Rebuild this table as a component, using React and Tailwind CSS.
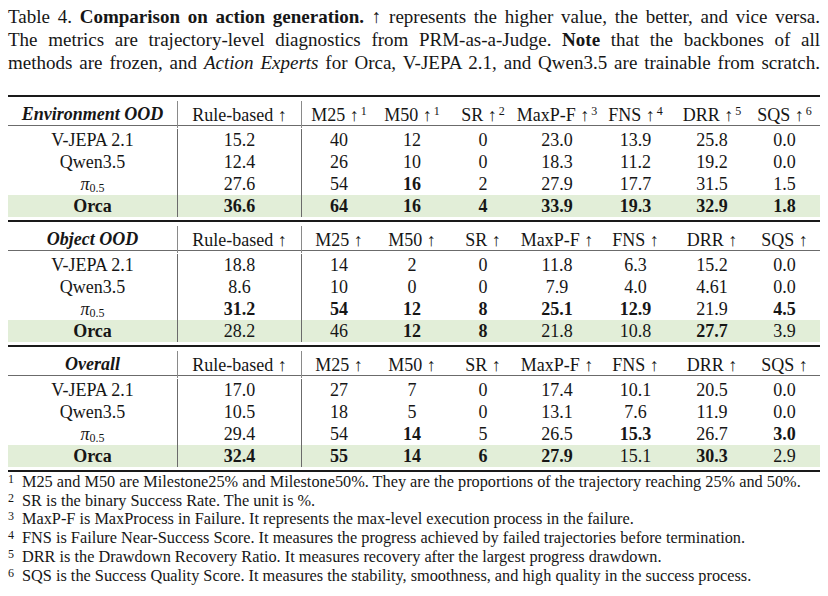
const cols = 'grid grid-cols-[170px_124px_74px_72px_70px_78px_79px_74px_71px]'

const heads = ['Rule-based', 'M25', 'M50', 'SR', 'MaxP-F', 'FNS', 'DRR', 'SQS']
const sups = ['', '1', '1', '2', '3', '4', '5', '6']

const sections = [
  {
    title: 'Environment OOD',
    numbered: true,
    rows: [
      ['15.2', '40', '12', '0', '23.0', '13.9', '25.8', '0.0'],
      ['12.4', '26', '10', '0', '18.3', '11.2', '19.2', '0.0'],
      ['27.6', '54', '*16', '2', '27.9', '17.7', '31.5', '1.5'],
      ['*36.6', '*64', '*16', '*4', '*33.9', '*19.3', '*32.9', '*1.8'],
    ],
  },
  {
    title: 'Object OOD',
    rows: [
      ['18.8', '14', '2', '0', '11.8', '6.3', '15.2', '0.0'],
      ['8.6', '10', '0', '0', '7.9', '4.0', '4.61', '0.0'],
      ['*31.2', '*54', '*12', '*8', '*25.1', '*12.9', '21.9', '*4.5'],
      ['28.2', '46', '*12', '*8', '21.8', '10.8', '*27.7', '3.9'],
    ],
  },
  {
    title: 'Overall',
    rows: [
      ['17.0', '27', '7', '0', '17.4', '10.1', '20.5', '0.0'],
      ['10.5', '18', '5', '0', '13.1', '7.6', '11.9', '0.0'],
      ['29.4', '54', '*14', '5', '26.5', '*15.3', '26.7', '*3.0'],
      ['*32.4', '*55', '*14', '*6', '*27.9', '15.1', '*30.3', '2.9'],
    ],
  },
]

const notes = [
  'M25 and M50 are Milestone25% and Milestone50%. They are the proportions of the trajectory reaching 25% and 50%.',
  'SR is the binary Success Rate. The unit is %.',
  'MaxP-F is MaxProcess in Failure. It represents the max-level execution process in the failure.',
  'FNS is Failure Near-Success Score. It measures the progress achieved by failed trajectories before termination.',
  'DRR is the Drawdown Recovery Ratio. It measures recovery after the largest progress drawdown.',
  'SQS is the Success Quality Score. It measures the stability, smoothness, and high quality in the success process.',
]

const Name = ({ i }) => {
  if (i === 0) return <span>V-JEPA 2.1</span>
  if (i === 1) return <span>Qwen3.5</span>
  if (i === 2) return (
    <span>
      <i>π</i><sub className="text-[12px] top-[2px] leading-none">0.5</sub>
    </span>
  )
  return <span className="font-bold">Orca</span>
}

const Value = ({ v }) => v.startsWith('*')
  ? <span className="font-bold">{v.slice(1)}</span>
  : <span>{v}</span>

const Section = ({ s }) => (
  <div>
    <div className={cols + ' h-[29px] border-b border-[#6b6b6b] whitespace-nowrap'}>
      <div className="my-[4px] flex items-center justify-center border-r border-[#8a8a8a] font-bold italic">
        {s.title}
      </div>
      {heads.map((h, i) => (
        <div key={h} className={'my-[4px] flex items-center justify-center leading-[20px]' + (i === 0 ? ' border-r border-[#8a8a8a]' : '')}>
          <span>
            {h} ↑{s.numbered && sups[i] && <sup className="text-[12px] leading-none ml-[2px] -top-[6px]">{sups[i]}</sup>}
          </span>
        </div>
      ))}
    </div>
    <div className="py-[3px]">
      {s.rows.map((r, i) => (
        <div key={i} className={cols + ' h-[22px] leading-[22px]' + (i === 3 ? ' bg-[#e2eed8]' : '')}>
          <div className="text-center border-r border-[#6b6b6b]"><Name i={i} /></div>
          {r.map((v, j) => (
            <div key={j} className={'text-center' + (j === 0 ? ' border-r border-[#6b6b6b]' : '')}>
              <Value v={v} />
            </div>
          ))}
        </div>
      ))}
    </div>
  </div>
)

export default function App() {
  return (
    <div className="w-[828px] h-[596px] bg-white px-2 pt-[5px] text-[#161616] font-['Liberation_Serif',serif] overflow-hidden">
      <div className="text-[19px] leading-[23px]">
        <p className="text-justify [text-align-last:justify]">
          Table 4. <b>Comparison on action generation.</b> ↑ represents the higher value, the better, and vice versa.
        </p>
        <p className="text-justify [text-align-last:justify]">
          The metrics are trajectory-level diagnostics from PRM-as-a-Judge. <b>Note</b> that the backbones of all
        </p>
        <p className="text-justify [text-align-last:justify]">
          methods are frozen, and <i>Action Experts</i> for Orca, V-JEPA 2.1, and Qwen3.5 are trainable from scratch.
        </p>
      </div>

      <div className="mt-[21px] text-[18px] border-t-2 border-[#1a1a1a]">
        {sections.map((s, i) => (
          <div key={s.title} className={i > 0 ? 'border-t-[2.5px] border-[#1a1a1a]' : ''}>
            <Section s={s} />
          </div>
        ))}
        <div className="border-t-2 border-[#1a1a1a]" />
      </div>

      <div className="pt-[1px] text-[16.3px] leading-[18.7px]">
        {notes.map((n, i) => (
          <div key={i} className="flex">
            <span className="w-[14px] shrink-0 text-[12px] leading-[13px]">{i + 1}</span>
            <span>{n}</span>
          </div>
        ))}
      </div>
    </div>
  )
}
